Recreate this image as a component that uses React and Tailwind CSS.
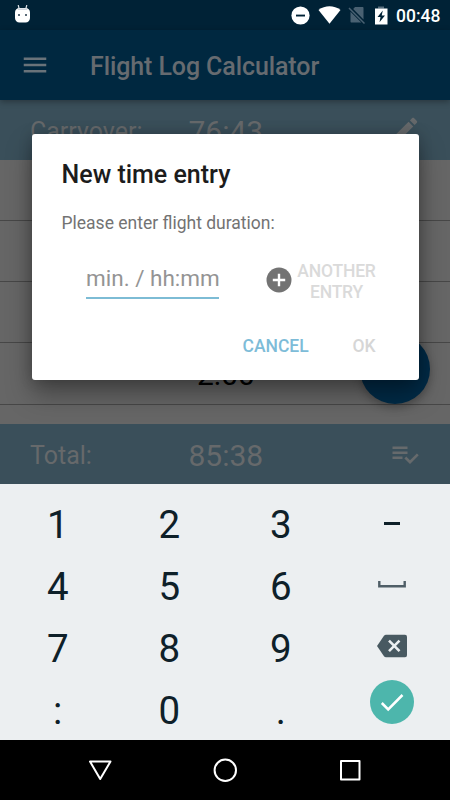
import React from 'react'

const MenuIcon = () => (
  <svg className="h-[30px] w-[30px] fill-[#69737a]" viewBox="0 0 24 24">
    <path d="M3 18h18v-2H3v2zm0-5h18v-2H3v2zm0-7v2h18V6H3z" />
  </svg>
)

const PencilIcon = () => (
  <svg className="-mt-[4px] h-[30px] w-[30px] fill-[#66696b]" viewBox="0 0 24 24">
    <path d="M3 17.25V21h3.75L17.81 9.94l-3.75-3.75L3 17.25zM20.71 7.04c.39-.39.39-1.02 0-1.41l-2.34-2.34c-.39-.39-1.02-.39-1.41 0l-1.83 1.83 3.75 3.75 1.83-1.83z" />
  </svg>
)

const ListCheckIcon = () => (
  <svg className="-mt-[3px] h-[30px] w-[30px] fill-[#666a6c]" viewBox="0 0 24 24">
    <path d="M14 10H2v2h12v-2zm0-4H2v2h12V6zM2 16h8v-2H2v2zm19.5-4.5L23 13l-6.99 7-4.51-4.5L13 14l3.01 3 5.49-5.5z" />
  </svg>
)

const StatusBar = () => (
  <div className="flex h-[30px] items-center bg-[#002236] pl-[14px] pr-[10px]">
    <svg className="h-[20px] w-[18px]" viewBox="0 0 18 20">
      <path d="M4.2 0l1 4M12.8 0l-1 4" stroke="#d8dee4" strokeWidth="1.200" />
      <path d="M1 7.500C1 4.500 3 3 5.500 3h6C14 3 16 4.500 16 7.500V13c0 2.600-2 4.500-4.500 4.500h-6C3 17.500 1 15.600 1 13z" fill="#fff" />
      <path d="M3.800 3.500h9.400v1.300H3.800z" fill="#c3cad4" />
      <circle cx="5" cy="10" r="1" fill="#23394a" />
      <circle cx="12" cy="10" r="1" fill="#23394a" />
    </svg>
    <svg className="ml-auto h-[19px] w-[19px]" viewBox="0 0 19 19">
      <circle cx="9.500" cy="9.500" r="9.100" fill="#fff" />
      <path d="M5 8.600h9v1.900H5z" fill="#002236" />
    </svg>
    <svg className="ml-[8px] h-[18px] w-[23px]" viewBox="0 0 23 18">
      <path d="M.5 4C7-1 16-1 22.500 4L11.500 17.800z" fill="#fff" />
    </svg>
    <svg className="ml-[7px] h-[18px] w-[18px]" viewBox="0 0 18 18">
      <path d="M7 1h7.500c.6 0 1 .4 1 1v11.500L5.200 3z M2.500 5.700L13.300 16.500H3.500c-.6 0-1-.4-1-1z" fill="#496172" />
      <path d="M1 2l15.500 15.500" stroke="#496172" strokeWidth="1.500" />
    </svg>
    <svg className="ml-[8px] h-[19px] w-[14px]" viewBox="0 0 14 19">
      <path d="M4 .5h6v2H4z" fill="#5b707f" />
      <path d="M1 2.500h12.500v16H1z" fill="#fff" />
      <path d="M8.800 4.500L3.500 11h3l-1 5.200L11 9.500H7.700z" fill="#002236" />
    </svg>
    <span className="ml-[8px] mt-[1px] w-[44px] whitespace-nowrap text-[17.500px] font-medium leading-[30px] text-white">00:48</span>
  </div>
)

const SummaryBar = ({ label, value, icon, className }) => (
  <div className={`flex h-[60px] items-center bg-[#3a4f5a] pl-[30px] text-[#66696b] ${className}`}>
    <span className="w-[158.500px] pt-[2px] text-[25px]">{label}</span>
    <span className="text-[30px]">{value}</span>
    <span className="ml-auto">{icon}</span>
  </div>
)

const Dialog = () => (
  <div className="absolute left-[31.500px] top-[134px] h-[246px] w-[387px] rounded-[3px] bg-white pl-[30px] shadow-[0_14px_26px_rgba(0,0,0,0.35),0_0_14px_rgba(0,0,0,0.2)]">
    <h2 className="pt-[26px] text-[25px] font-medium leading-[30px] text-[#1c1c1c]">New time entry</h2>
    <p className="mt-[21px] text-[17.500px] leading-[24px] text-[#737373]">Please enter flight duration:</p>
    <div className="mt-[18px] flex items-center">
      <div className="ml-[24.500px] h-[42px] w-[133px] whitespace-nowrap border-b-2 border-[#7dbcd5] text-[22.500px] leading-[42px] text-[#949494]">
        min. / hh:mm
      </div>
      <svg className="ml-[47px] mt-[4px] h-[26px] w-[26px]" viewBox="0 0 26 26">
        <circle cx="13" cy="13" r="12.500" fill="#737373" />
        <path d="M13 6.800v12.400M6.800 13h12.400" stroke="#fff" strokeWidth="2.400" />
      </svg>
      <button className="ml-[3.500px] mt-[8px] w-[82px] text-center text-[17.500px] font-medium leading-[20.500px] tracking-[-0.01em] text-[#dadada]">
        ANOTHER ENTRY
      </button>
    </div>
    <div className="mt-[32px] flex text-[17.500px] font-medium leading-[24px]">
      <button className="ml-[181px] w-[67px] text-left text-[#7dbcd8]">CANCEL</button>
      <button className="ml-[43px] text-[#d6d6d6]">OK</button>
    </div>
  </div>
)

const DashIcon = () => <div className="-mt-[3px] h-[3px] w-[16px] bg-[#0e2029]" />

const SpaceIcon = () => (
  <svg className="-mt-[6px] h-[7px] w-[28px]" viewBox="0 0 28 7">
    <path d="M1.300 0v5.200h25.400V0" fill="none" stroke="#4f5e67" strokeWidth="2.400" />
  </svg>
)

const BackspaceIcon = () => (
  <svg className="-mt-[6px] h-[24px] w-[30px]" viewBox="0 0 30 24">
    <path d="M0 12L7 1.800Q7.800.7 9 .7h19q2 0 2 2v18.600q0 2-2 2H9q-1.200 0-2-1.100z" fill="#485961" />
    <path d="M12 6.700l10.500 10.500M22.500 6.700L12 17.200" stroke="#eceff1" strokeWidth="2.600" />
  </svg>
)

const EnterIcon = () => (
  <svg className="-mt-[18px] h-[44px] w-[44px]" viewBox="0 0 44 44">
    <circle cx="22" cy="22" r="22" fill="#4db6ac" />
    <path d="M11.800 23l6.400 6.400L32.500 15" fill="none" stroke="#fff" strokeWidth="2.500" />
  </svg>
)

const keys = [
  '1', '2', '3', <DashIcon />,
  '4', '5', '6', <SpaceIcon />,
  '7', '8', '9', <BackspaceIcon />,
  ':', '0', '.', <EnterIcon />,
]

const Keyboard = () => (
  <div className="grid h-[256px] grid-cols-4 grid-rows-[62px_62px_62px_62px] bg-[#eceff1] pl-[2px] pr-[2px] pt-[10px] text-[38.500px] text-[#0e2029]">
    {keys.map((key, i) => (
      <div key={i} className="flex h-[62px] items-center justify-center leading-[62px]">{key}</div>
    ))}
  </div>
)

const NavBar = () => (
  <div className="relative flex h-[60px] items-center justify-between bg-black px-[87.500px]">
    <svg className="h-[25px] w-[25px]" viewBox="0 0 25 25" fill="none" stroke="#fff" strokeWidth="2" strokeLinejoin="round">
      <path d="M2 3.500h20.500L12.200 21z" />
    </svg>
    <svg className="h-[25px] w-[25px]" viewBox="0 0 25 25" fill="none" stroke="#fff" strokeWidth="2">
      <circle cx="12.300" cy="12.300" r="10.700" />
    </svg>
    <svg className="h-[25px] w-[25px]" viewBox="0 0 25 25" fill="none" stroke="#fff" strokeWidth="2" strokeLinejoin="round">
      <path d="M3 3h18.500v18.500H3z" />
    </svg>
  </div>
)

const App = () => {
  return (
    <div className="relative flex h-[800px] w-[450px] flex-col overflow-hidden bg-[#666666] font-['Roboto',sans-serif]">
      <StatusBar />
      <header className="relative flex h-[70px] items-center bg-[#002840] pl-[20px] shadow-[0_2px_6px_rgba(0,0,0,0.3)]">
        <MenuIcon />
        <h1 className="ml-[40px] mt-[4px] text-[25px] font-medium tracking-[-0.004em] text-[#666b70]">Flight Log Calculator</h1>
      </header>
      <SummaryBar label="Carryover:" value="76:43" icon={<PencilIcon />} className="pt-[2px] pr-[29.500px]" />

      <div className="flex h-[264px] flex-col">
        <div className="h-[61px] border-b border-[#474747]" />
        <div className="h-[61px] border-b border-[#474747]" />
        <div className="h-[61px] border-b border-[#474747]" />
        <div className="h-[62px] border-b border-[#474747] pl-[197px] text-[30px] leading-[64px] text-black">2:00</div>
      </div>
      {/* floating add button, mostly under the dialog */}
      <div className="absolute left-[360px] top-[334px] h-[70px] w-[70px] rounded-full bg-[#002b47] shadow-[0_4px_8px_rgba(0,0,0,0.25)]" />

      <SummaryBar label="Total:" value="85:38" icon={<ListCheckIcon />} className="pt-[2px] pr-[30px]" />
      <Dialog />
      <Keyboard />
      <NavBar />
    </div>
  )
}

export default App
